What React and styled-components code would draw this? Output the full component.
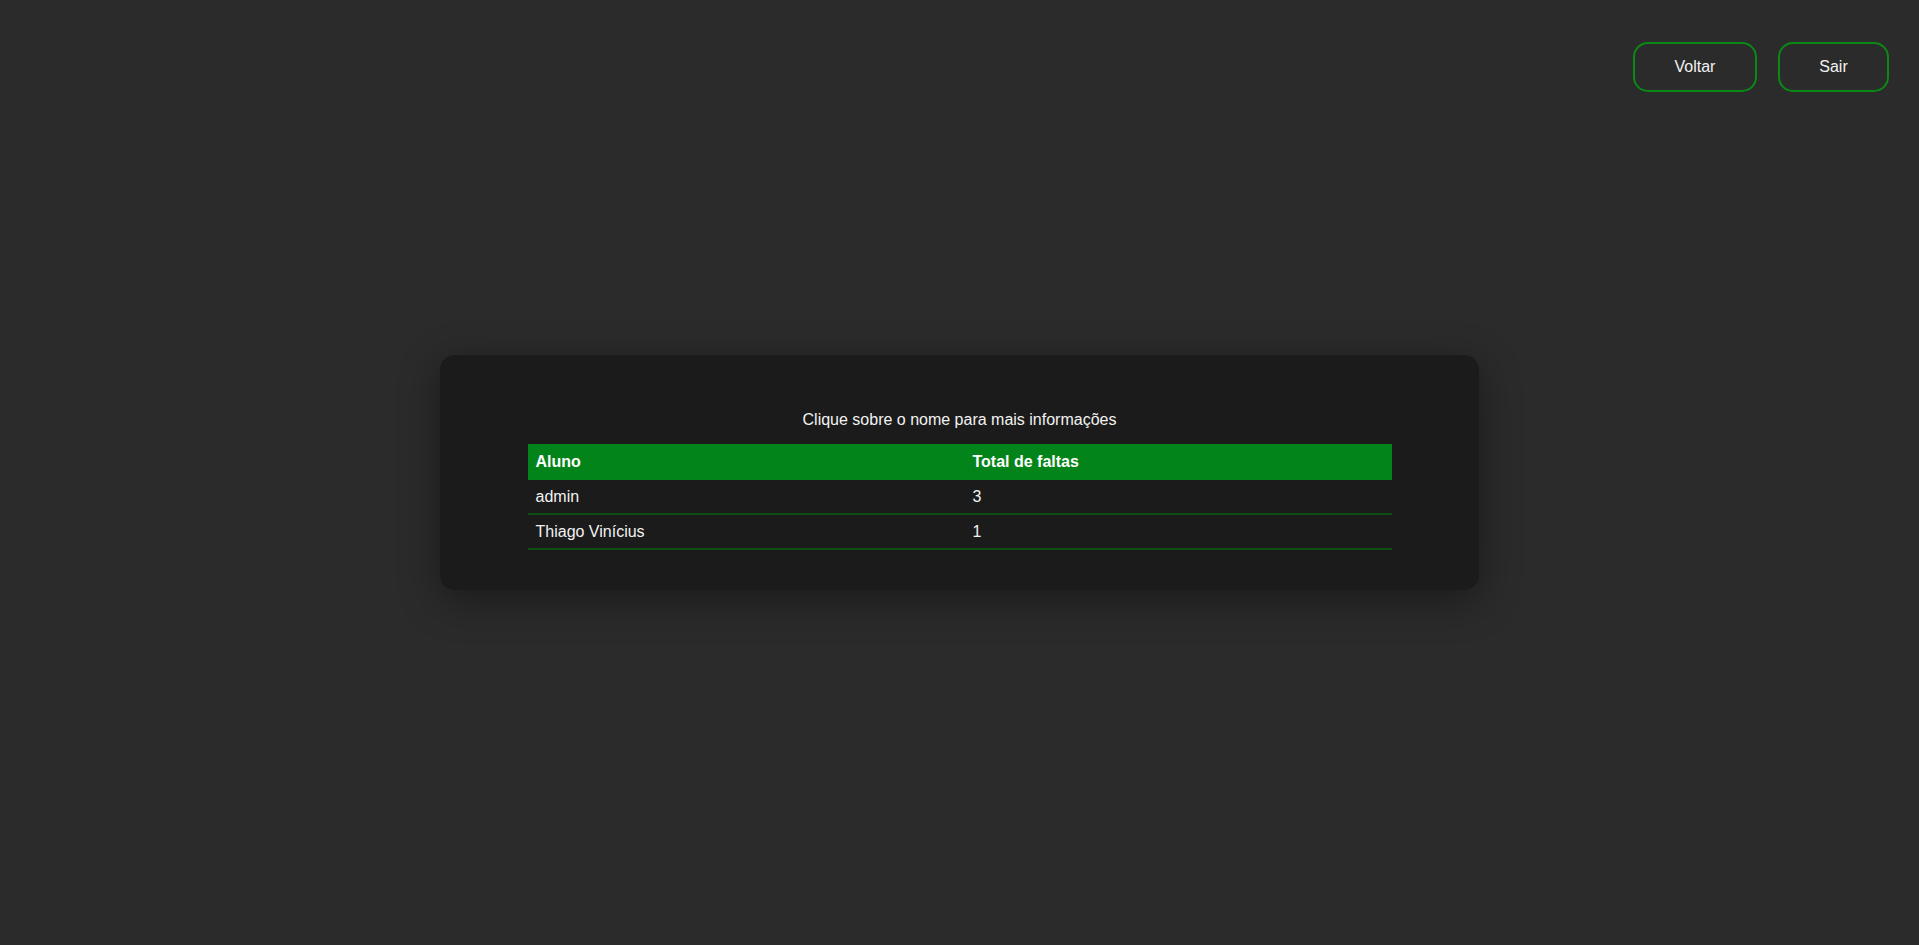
import React from "react";
import styled, { createGlobalStyle } from "styled-components";

const GlobalStyle = createGlobalStyle`
  html, body {
    margin: 0;
    padding: 0;
    background-color: #2b2b2b;
    font-family: "Liberation Sans", Arial, sans-serif;
    color: #f2f2f2;
  }
`;

const Page = styled.div`
  min-height: 100vh;
  display: grid;
  grid-template-rows: 1fr auto 1fr;
  justify-items: center;
`;

const TopBar = styled.nav`
  justify-self: stretch;
  align-self: start;
  display: flex;
  justify-content: flex-end;
  gap: 21px;
  padding: 42px 30px 0 0;
`;

const NavButton = styled.button`
  width: ${(props) => props.width}px;
  height: 50px;
  background: transparent;
  border: 2px solid #0a8a14;
  border-radius: 15px;
  color: #f2f2f2;
  font-family: "Liberation Sans", Arial, sans-serif;
  font-size: 16px;
  cursor: pointer;
`;

const Card = styled.main`
  width: 1039px;
  box-sizing: border-box;
  padding: 56px 0 40px;
  background-color: #1b1b1b;
  border-radius: 15px;
  box-shadow: 0 10px 40px rgba(0, 0, 0, 0.4);
`;

const Title = styled.p`
  margin: 0 0 15px;
  text-align: center;
  font-size: 16px;
  line-height: 18px;
`;

const Table = styled.table`
  width: 864px;
  margin: 0 auto;
  border-collapse: collapse;
  font-size: 16px;
`;

const Th = styled.th`
  text-align: left;
  padding: 9px 8px;
  line-height: 18px;
  background-color: #03841a;
  color: #ffffff;
  font-weight: bold;
  width: ${(props) => props.width || "auto"};
`;

const Td = styled.td`
  padding: 8px 8px;
  line-height: 17px;
  border-bottom: 2px solid #0c4e14;
  cursor: ${(props) => (props.link ? "pointer" : "default")};
`;

const alunos = [
  { nome: "admin", faltas: 3 },
  { nome: "Thiago Vinícius", faltas: 1 },
];

export default function App() {
  return (
    <Page>
      <GlobalStyle />
      <TopBar>
        <NavButton width={124}>Voltar</NavButton>
        <NavButton width={111}>Sair</NavButton>
      </TopBar>
      <Card>
        <Title>Clique sobre o nome para mais informações</Title>
        <Table>
          <thead>
            <tr>
              <Th width="421px">Aluno</Th>
              <Th>Total de faltas</Th>
            </tr>
          </thead>
          <tbody>
            {alunos.map((a) => (
              <tr key={a.nome}>
                <Td link>{a.nome}</Td>
                <Td>{a.faltas}</Td>
              </tr>
            ))}
          </tbody>
        </Table>
      </Card>
    </Page>
  );
}
